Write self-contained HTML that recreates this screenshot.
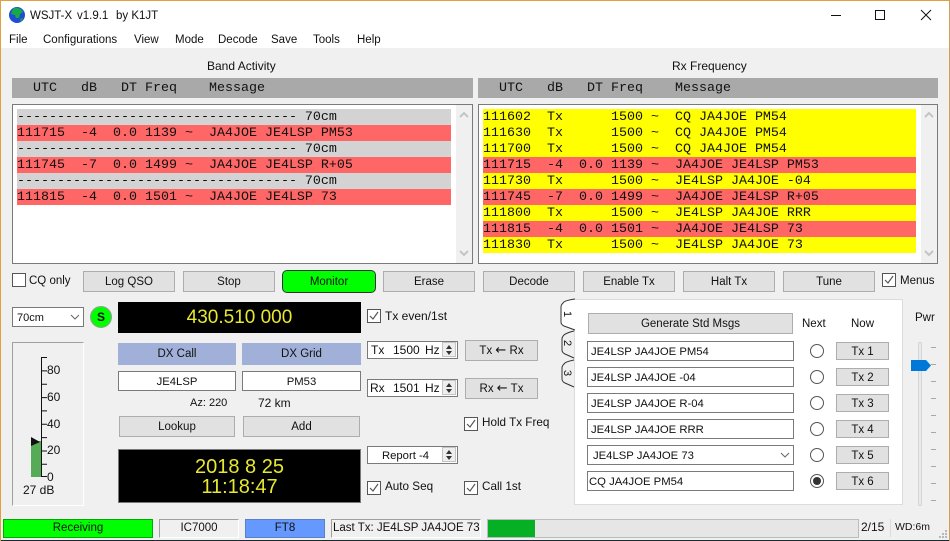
<!DOCTYPE html>
<html><head><meta charset="utf-8">
<style>
html,body{margin:0;padding:0;background:#f0f0f0}
#w{position:relative;width:950px;height:541px;overflow:hidden;background:#f0f0f0;font:12px "Liberation Sans","Noto Sans CJK JP",sans-serif;color:#111}
#w div,#w span.a{position:absolute;box-sizing:border-box;white-space:pre}
.t{line-height:14px;height:14px}
.mn{font-size:11.5px}
.c{text-align:center}
.b{background:#e1e1e1;border:1px solid #adadad;text-align:center;font-size:11.5px;padding-top:1px}
.i{background:#fff;border:1px solid #7a7a7a;font-size:11.3px;padding-top:1px}
.m{font:13.33px/18px "Liberation Mono",monospace;height:16px;color:#111}
.ck{width:14px;height:14px;background:#fff;border:1px solid #555}
.ck svg{position:absolute;left:1px;top:1px}
.r{width:14px;height:14px;border:1px solid #555;border-radius:50%;background:#fff}
.bar{background:#a9a9a9;height:20px}
</style></head><body>
<div id="w">
<div style="left:0;top:0;width:950px;height:48px;background:#fff"></div>
<svg style="position:absolute;left:9px;top:7px" width="17" height="17" viewBox="0 0 17 17"><circle cx="8" cy="8" r="8" fill="#1f4fd0"/><path d="M5 1c4-1 8 1 9 4l-3 2-1 4-3 0-1-3-4-1 1-3z" fill="#18a848"/><path d="M11 12l3-1-2 4z" fill="#18a848"/></svg>
<div class="t mn" style="left:30px;top:9px">WSJT-X</div>
<div class="t mn" style="left:77px;top:9px">v1.9.1</div>
<div class="t mn" style="left:116px;top:9px">by K1JT</div>
<svg style="position:absolute;left:830px;top:8px" width="105" height="15" viewBox="0 0 105 15" fill="none" stroke="#111"><path d="M1 7.500h10"/><rect x="45.500" y="2.500" width="9" height="9"/><path d="M91 2l10 10M101 2l-10 10"/></svg>
<div class="t mn" style="left:9px;top:33px">File</div>
<div class="t mn" style="left:43px;top:33px">Configurations</div>
<div class="t mn" style="left:134px;top:33px">View</div>
<div class="t mn" style="left:175px;top:33px">Mode</div>
<div class="t mn" style="left:218px;top:33px">Decode</div>
<div class="t mn" style="left:271px;top:33px">Save</div>
<div class="t mn" style="left:313px;top:33px">Tools</div>
<div class="t mn" style="left:357px;top:33px">Help</div>

<div class="t" style="left:207px;top:59px">Band Activity</div>
<div class="t" style="left:672px;top:59px">Rx Frequency</div>

<div class="bar" style="left:12px;top:78px;width:461px"></div>
<div class="bar" style="left:478px;top:78px;width:460px"></div>
<div class="m" style="left:17px;top:80px">  UTC   dB   DT Freq    Message</div>
<div class="m" style="left:483px;top:80px">  UTC   dB   DT Freq    Message</div>

<div class="i" style="left:12px;top:104px;width:461px;height:160px"></div>
<div style="left:456px;top:105px;width:16px;height:158px;background:#f0f0f0"></div>
<svg style="position:absolute;left:456px;top:108px" width="16" height="152" fill="none" stroke="#c4c4c4" stroke-width="2"><path d="M4 9l4-4 4 4M4 143l4 4 4-4"/></svg>
<div class="m" style="left:17px;top:109px;width:434px;background:#d3d3d3">----------------------------------- 70cm</div>
<div class="m" style="left:17px;top:125px;width:434px;background:#ff6666">111715  -4  0.0 1139 ~  JA4JOE JE4LSP PM53</div>
<div class="m" style="left:17px;top:141px;width:434px;background:#d3d3d3">----------------------------------- 70cm</div>
<div class="m" style="left:17px;top:157px;width:434px;background:#ff6666">111745  -7  0.0 1499 ~  JA4JOE JE4LSP R+05</div>
<div class="m" style="left:17px;top:173px;width:434px;background:#d3d3d3">----------------------------------- 70cm</div>
<div class="m" style="left:17px;top:189px;width:434px;background:#ff6666">111815  -4  0.0 1501 ~  JA4JOE JE4LSP 73</div>

<div class="i" style="left:478px;top:104px;width:460px;height:160px"></div>
<div style="left:921px;top:105px;width:16px;height:158px;background:#f0f0f0"></div>
<svg style="position:absolute;left:921px;top:108px" width="16" height="152" fill="none" stroke="#c4c4c4" stroke-width="2"><path d="M4 9l4-4 4 4M4 143l4 4 4-4"/></svg>
<div class="m" style="left:483px;top:109px;width:433px;background:#ff0">111602  Tx      1500 ~  CQ JA4JOE PM54</div>
<div class="m" style="left:483px;top:125px;width:433px;background:#ff0">111630  Tx      1500 ~  CQ JA4JOE PM54</div>
<div class="m" style="left:483px;top:141px;width:433px;background:#ff0">111700  Tx      1500 ~  CQ JA4JOE PM54</div>
<div class="m" style="left:483px;top:157px;width:433px;background:#ff6666">111715  -4  0.0 1139 ~  JA4JOE JE4LSP PM53</div>
<div class="m" style="left:483px;top:173px;width:433px;background:#ff0">111730  Tx      1500 ~  JE4LSP JA4JOE -04</div>
<div class="m" style="left:483px;top:189px;width:433px;background:#ff6666">111745  -7  0.0 1499 ~  JA4JOE JE4LSP R+05</div>
<div class="m" style="left:483px;top:205px;width:433px;background:#ff0">111800  Tx      1500 ~  JE4LSP JA4JOE RRR</div>
<div class="m" style="left:483px;top:221px;width:433px;background:#ff6666">111815  -4  0.0 1501 ~  JA4JOE JE4LSP 73</div>
<div class="m" style="left:483px;top:237px;width:433px;background:#ff0">111830  Tx      1500 ~  JE4LSP JA4JOE 73</div>

<div class="ck" style="left:12px;top:273px"></div>
<div class="t" style="left:29px;top:274px;font-size:11.5px">CQ only</div>
<div class="b" style="left:83px;top:271px;width:92px;height:21px;line-height:19px">Log QSO</div>
<div class="b" style="left:183px;top:271px;width:92px;height:21px;line-height:19px">Stop</div>
<div class="b" style="left:282px;top:270px;width:94px;height:23px;line-height:21px;background:#0f0;border-color:#333;border-radius:5px">Monitor</div>
<div class="b" style="left:383px;top:271px;width:92px;height:21px;line-height:19px">Erase</div>
<div class="b" style="left:483px;top:271px;width:92px;height:21px;line-height:19px">Decode</div>
<div class="b" style="left:583px;top:271px;width:92px;height:21px;line-height:19px">Enable Tx</div>
<div class="b" style="left:683px;top:271px;width:92px;height:21px;line-height:19px">Halt Tx</div>
<div class="b" style="left:783px;top:271px;width:92px;height:21px;line-height:19px">Tune</div>
<div class="ck" style="left:882px;top:273px"><svg width="10" height="10" fill="none" stroke="#555" stroke-width="1.2"><path d="M1 5l3 3 5-7"/></svg></div>
<div class="t" style="left:900px;top:274px;font-size:11.5px">Menus</div>

<div class="i" style="left:12px;top:307px;width:72px;height:20px;line-height:18px;padding-left:4px;color:#111;font-size:11px">70cm</div>
<svg style="position:absolute;left:70px;top:314px" width="10" height="6" fill="none" stroke="#666"><path d="M1 1l4 4 4-4"/></svg>
<div class="c" style="left:90px;top:306px;width:22px;height:22px;border-radius:50%;background:#0f0;border:1px solid #999;font-weight:bold;line-height:20px">S</div>

<div style="left:12px;top:342px;width:72px;height:164px;border:1px solid;border-color:#a0a0a0 #fff #fff #a0a0a0"></div>
<svg style="position:absolute;left:30px;top:355px" width="20" height="125"><path d="M11.500 2v120" stroke="#111" fill="none"/><path d="M12 2.500h5M12 15.900h5M12 29.200h5M12 42.600h5M12 55.900h5M12 69.300h5M12 82.600h5M12 96h5M12 109.300h5M12 121.500h5" stroke="#111" fill="none"/><rect x="1" y="86" width="10" height="36" fill="#56ab56"/><path d="M1 82v9l9-4z" fill="#111"/></svg>
<div class="t" style="left:47px;top:363px">80</div>
<div class="t" style="left:47px;top:390px">60</div>
<div class="t" style="left:47px;top:417px">40</div>
<div class="t" style="left:47px;top:443px">20</div>
<div class="t" style="left:47px;top:470px">0</div>
<div class="t" style="left:23px;top:483px">27 dB</div>

<div class="c" style="left:118px;top:302px;width:243px;height:31px;background:#000;color:#e8e830;font-size:19px;line-height:31px">430.510 000</div>
<div class="c" style="left:118px;top:343px;width:118px;height:22px;background:#a0b0d8;line-height:22px;font-size:11.5px">DX Call</div>
<div class="c" style="left:242px;top:343px;width:119px;height:22px;background:#a0b0d8;line-height:22px;font-size:11.5px">DX Grid</div>
<div class="i c" style="left:118px;top:371px;width:118px;height:20px;line-height:18px">JE4LSP</div>
<div class="i c" style="left:242px;top:371px;width:119px;height:20px;line-height:18px">PM53</div>
<div class="t" style="left:190px;top:396px;font-size:11px">Az: 220</div>
<div class="t" style="left:258px;top:396px">72 km</div>
<div class="b" style="left:119px;top:416px;width:116px;height:21px;line-height:19px">Lookup</div>
<div class="b" style="left:243px;top:416px;width:117px;height:21px;line-height:19px">Add</div>
<div class="c" style="left:118px;top:449px;width:243px;height:54px;background:#000;border:1px solid #777;color:#e8e830;font-size:20px;line-height:20px;padding-top:7px">2018 8 25
11:18:47</div>

<div class="ck" style="left:367px;top:309px"><svg width="10" height="10" fill="none" stroke="#555" stroke-width="1.2"><path d="M1 5l3 3 5-7"/></svg></div>
<div class="t" style="left:385px;top:309px">Tx even/1st</div>
<div class="i" style="left:367px;top:341px;width:91px;height:18px"></div>
<div class="t" style="left:371px;top:343px">Tx</div><div class="t" style="left:393px;top:343px">1500</div><div class="t" style="left:425px;top:343px">Hz</div>
<div class="i" style="left:367px;top:379px;width:91px;height:18px"></div>
<div class="t" style="left:370px;top:381px">Rx</div><div class="t" style="left:393px;top:381px">1501</div><div class="t" style="left:425px;top:381px">Hz</div>
<div class="i c" style="left:367px;top:446px;width:91px;height:18px;line-height:16px;padding-right:14px">Report -4</div>
<svg style="position:absolute;left:442px;top:342px" width="15" height="16" fill="#333" stroke="#c4c4c4"><rect x=".5" y=".5" width="13" height="14" fill="#eee"/><path d="M7 3l3 4H4zM7 13l3-4H4z" stroke="none"/></svg>
<svg style="position:absolute;left:442px;top:380px" width="15" height="16" fill="#333" stroke="#c4c4c4"><rect x=".5" y=".5" width="13" height="14" fill="#eee"/><path d="M7 3l3 4H4zM7 13l3-4H4z" stroke="none"/></svg>
<svg style="position:absolute;left:442px;top:447px" width="15" height="16" fill="#333" stroke="#c4c4c4"><rect x=".5" y=".5" width="13" height="14" fill="#eee"/><path d="M7 3l3 4H4zM7 13l3-4H4z" stroke="none"/></svg>
<div class="b" style="left:465px;top:340px;width:73px;height:21px;line-height:19px">Tx <span style="font:13px 'DejaVu Sans',sans-serif">←</span> Rx</div>
<div class="b" style="left:465px;top:378px;width:73px;height:21px;line-height:19px">Rx <span style="font:13px 'DejaVu Sans',sans-serif">←</span> Tx</div>
<div class="ck" style="left:464px;top:417px"><svg width="10" height="10" fill="none" stroke="#555" stroke-width="1.2"><path d="M1 5l3 3 5-7"/></svg></div>
<div class="t" style="left:482px;top:416px;font-size:11.7px">Hold Tx Freq</div>
<div class="ck" style="left:367px;top:481px"><svg width="10" height="10" fill="none" stroke="#555" stroke-width="1.2"><path d="M1 5l3 3 5-7"/></svg></div>
<div class="t" style="left:385px;top:480px;font-size:11.7px">Auto Seq</div>
<div class="ck" style="left:464px;top:481px"><svg width="10" height="10" fill="none" stroke="#555" stroke-width="1.2"><path d="M1 5l3 3 5-7"/></svg></div>
<div class="t" style="left:482px;top:480px;font-size:11.7px">Call 1st</div>

<div style="left:574px;top:299px;width:329px;height:206px;background:#fff;border:1px solid #dcdcdc"></div>
<svg style="position:absolute;left:558px;top:296px" width="18" height="96" fill="none" stroke="#333"><path d="M17 3C10 4 6 5 5 7c-2 2-2 3-2 5v14c0 2 1 3 3 4l11 4" fill="#fff"/><path d="M16 35C11 36 7 38 6 39c-2 2-2 3-2 4v11c0 2 1 3 3 4l9 4M16 64C11 65 7 66 6 68c-2 2-2 3-2 4v11c0 2 1 3 3 4l9 4"/></svg>
<div class="c" style="left:561px;top:308px;width:12px;height:12px;line-height:12px;font-size:11px;transform:rotate(90deg)">1</div>
<div class="c" style="left:561px;top:337px;width:12px;height:12px;line-height:12px;font-size:11px;transform:rotate(90deg)">2</div>
<div class="c" style="left:561px;top:367px;width:12px;height:12px;line-height:12px;font-size:11px;transform:rotate(90deg)">3</div>

<div class="b" style="left:588px;top:313px;width:205px;height:21px;line-height:19px">Generate Std Msgs</div>
<div class="t mn" style="left:802px;top:317px">Next</div>
<div class="t mn" style="left:851px;top:317px">Now</div>

<div class="i" style="left:587px;top:341px;width:207px;height:20px;line-height:18px;padding-left:3px">JE4LSP JA4JOE PM54</div>
<div class="i" style="left:587px;top:367px;width:207px;height:20px;line-height:18px;padding-left:3px">JE4LSP JA4JOE -04</div>
<div class="i" style="left:587px;top:393px;width:207px;height:20px;line-height:18px;padding-left:3px">JE4LSP JA4JOE R-04</div>
<div class="i" style="left:587px;top:419px;width:207px;height:20px;line-height:18px;padding-left:3px">JE4LSP JA4JOE RRR</div>
<div class="i" style="left:587px;top:445px;width:207px;height:20px;line-height:18px;padding-left:5px">JE4LSP JA4JOE 73</div>
<svg style="position:absolute;left:780px;top:452px" width="10" height="6" fill="none" stroke="#666"><path d="M1 1l4 4 4-4"/></svg>
<div class="i" style="left:587px;top:471px;width:207px;height:20px;line-height:18px;padding-left:1px">CQ JA4JOE PM54</div>

<div class="r" style="left:810px;top:344px"></div>
<div class="r" style="left:810px;top:370px"></div>
<div class="r" style="left:810px;top:396px"></div>
<div class="r" style="left:810px;top:422px"></div>
<div class="r" style="left:810px;top:448px"></div>
<div class="r" style="left:810px;top:474px"><div style="left:2px;top:2px;width:8px;height:8px;border-radius:50%;background:#333"></div></div>

<div class="b" style="left:836px;top:342px;width:53px;height:18px;line-height:16px">Tx 1</div>
<div class="b" style="left:836px;top:368px;width:53px;height:18px;line-height:16px">Tx 2</div>
<div class="b" style="left:836px;top:394px;width:53px;height:18px;line-height:16px">Tx 3</div>
<div class="b" style="left:836px;top:420px;width:53px;height:18px;line-height:16px">Tx 4</div>
<div class="b" style="left:836px;top:446px;width:53px;height:18px;line-height:16px">Tx 5</div>
<div class="b" style="left:836px;top:472px;width:53px;height:18px;line-height:16px">Tx 6</div>

<div class="t mn" style="left:915px;top:311px">Pwr</div>
<div style="left:918px;top:342px;width:4px;height:164px;background:#e7eaea;border:1px solid #d6d6d6"></div>
<svg style="position:absolute;left:911px;top:345px" width="26" height="160"><path d="M0 15h15l5 5.500-5 5.500H0z" fill="#0078d7"/><path d="M20 2.500h5M20 19.500h5M20 36.500h5M20 53.500h5M20 70.500h5M20 87.500h5M20 104.500h5M20 121.500h5M20 138.500h5M20 155.500h5" stroke="#a8a89c" fill="none"/></svg>

<div class="c mn" style="left:3px;top:519px;width:150px;height:19px;background:#0f0;border:1px solid #0a0;line-height:17px">Receiving</div>
<div class="c mn" style="left:159px;top:519px;width:80px;height:19px;border:1px solid;border-color:#a0a0a0 #fff #fff #a0a0a0;line-height:17px">IC7000</div>
<div class="c mn" style="left:245px;top:519px;width:80px;height:19px;background:#6699ff;border:1px solid #5a80c8;line-height:17px">FT8</div>
<div class="mn" style="left:331px;top:519px;width:150px;height:19px;border:1px solid;border-color:#a0a0a0 #fff #fff #a0a0a0;line-height:17px;padding-left:1px">Last Tx: JE4LSP JA4JOE 73</div>
<div style="left:487px;top:519px;width:372px;height:19px;background:#e6e6e6;border:1px solid #bcbcbc"></div>
<div style="left:488px;top:520px;width:47px;height:17px;background:#06b025"></div>
<div class="t" style="left:861px;top:520px">2/15</div>
<div style="left:890px;top:519px;width:1px;height:18px;background:#dcdcdc"></div>
<div class="t" style="left:895px;top:520px;font-size:10.500px">WD:6m</div>
<svg style="position:absolute;left:938px;top:529px" width="10" height="10" fill="#b8b8b8"><rect x="7" y="1" width="2" height="2"/><rect x="4" y="4" width="2" height="2"/><rect x="7" y="4" width="2" height="2"/><rect x="1" y="7" width="2" height="2"/><rect x="4" y="7" width="2" height="2"/><rect x="7" y="7" width="2" height="2"/></svg>
<div style="left:0;top:540px;width:950px;height:1px;background:#1b2b36"></div>
<div style="left:0;top:0;width:950px;height:1px;background:#e0a040"></div>
<div style="left:0;top:0;width:1px;height:541px;background:#e0a040"></div>
<div style="left:949px;top:0;width:1px;height:541px;background:#cf9f60"></div>
</div>
</body></html>
